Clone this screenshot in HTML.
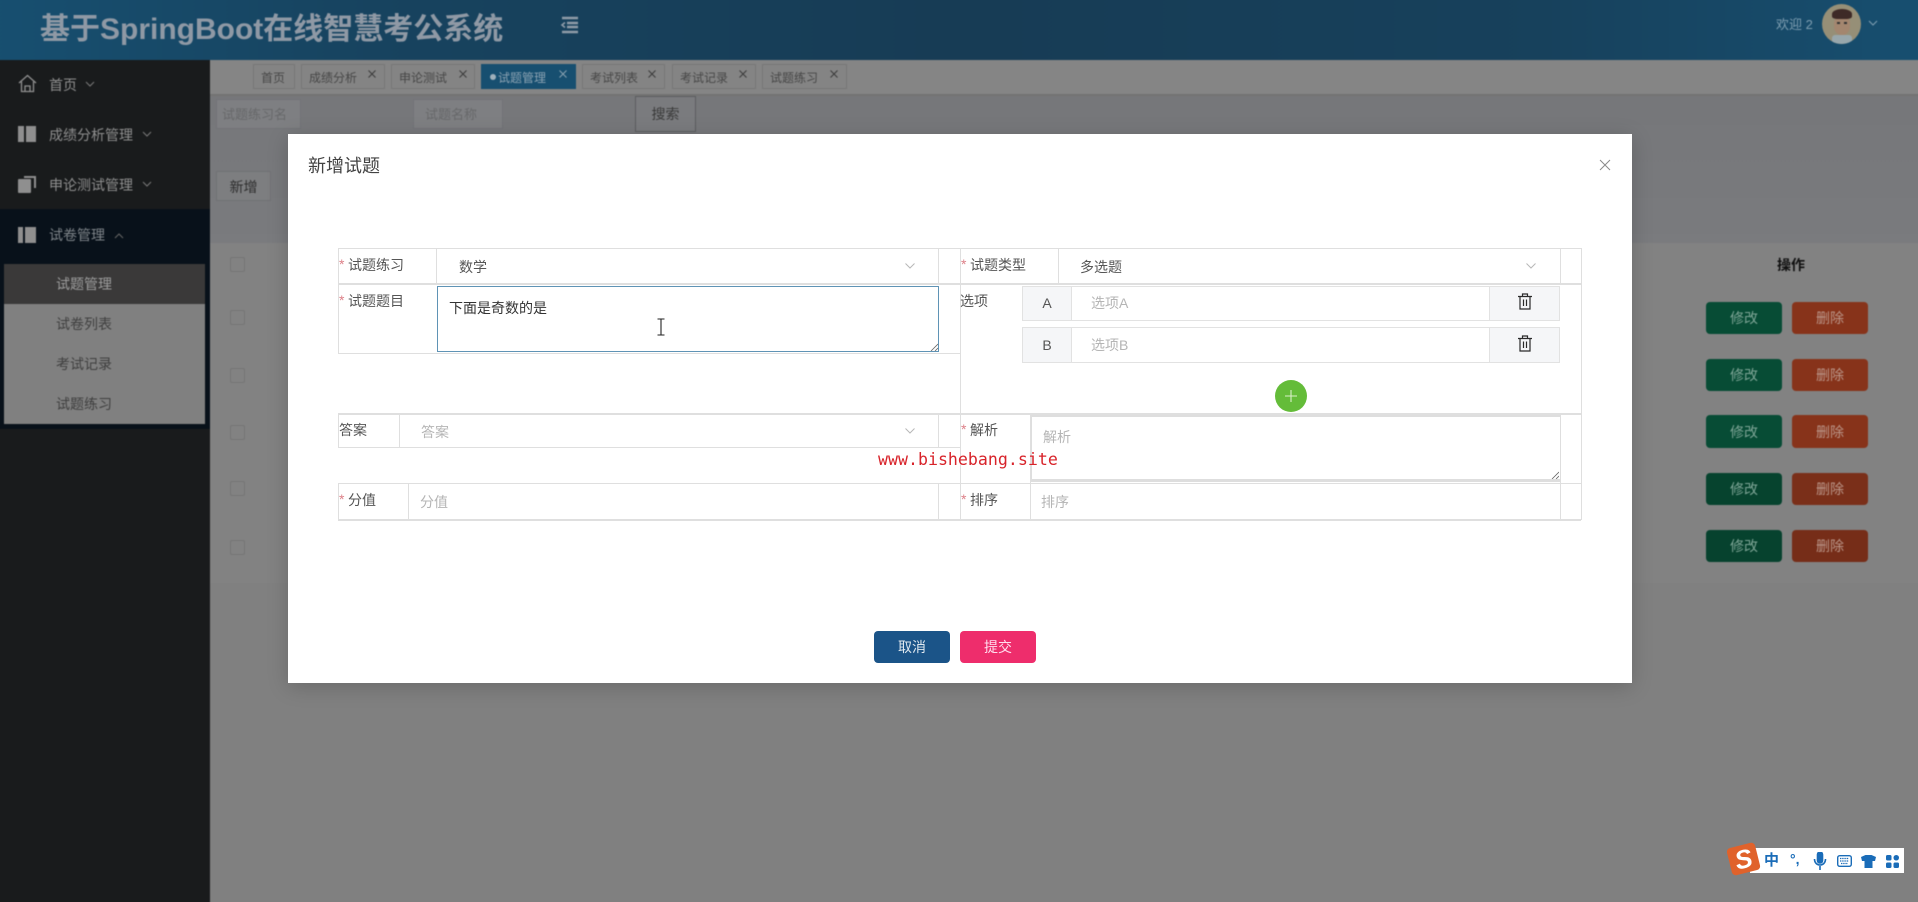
<!DOCTYPE html>
<html lang="zh"><head><meta charset="utf-8"><title>新增试题</title>
<style>
html,body{margin:0;padding:0;width:1918px;height:902px;overflow:hidden;background:#808080}
body{font-family:"Liberation Sans","Noto Sans CJK SC",sans-serif;font-size:14px;position:relative}
div,span,svg{position:absolute;box-sizing:border-box}
.t{line-height:20px;height:20px;white-space:nowrap}
.c{text-align:center}
#bg{left:0;top:0;width:1918px;height:902px;filter:blur(.5px)}
.tag{top:64px;height:25px;line-height:26px;font-size:12px;color:#474747;border:1px solid #777;background:#848484;padding-left:7px;white-space:nowrap}
.x{top:5px}
.m{left:49px;color:#8f8f8f}
.s{left:56px;color:#3f3f3f}
.ch{left:230px;width:15px;height:15px;border:1px solid #757575;border-radius:2px}
.b{width:76px;height:32px;border-radius:4px;line-height:32px;text-align:center;font-size:14px}
.g{left:1706px;background:#074c35;color:#7ea596}
.r{left:1792px;background:#87331a;color:#bb9689}
.l{background:#dfdfdf}
.lab{color:#555;font-size:14px}
.st{color:#dd8088;font-size:14px}
.ph{color:#b5b5b5}
.bx{background:#fff;border:1px solid #e2e2e2}
.gy{background:#f5f6f8;border:1px solid #e2e2e2}
</style></head><body>
<svg width="0" height="0" style="left:0;top:0"><defs><path id="xm" d="M.5.5L7.5 7.5M7.5.5L.5 7.5" fill="none" stroke-width="1"/></defs></svg>
<div id="bg">
 <div style="left:-6px;top:-6px;width:1930px;height:66px;background:linear-gradient(90deg,#174f70 0%,#17435f 20%,#173c55 50%,#17415c 80%,#174f70 100%)"></div>
 <div class="t" style="left:40px;top:15px;height:30px;line-height:30px;font-size:30px;font-weight:bold;color:#8f99a5">基于SpringBoot在线智慧考公系统</div>
 <svg style="left:560px;top:16px" width="20" height="18" viewBox="0 0 20 18" fill="none" stroke="#8f9ca8" stroke-width="2.4"><path d="M2 2H18M7 7H18M7 11H18M2 16H18"/><path d="M5 6.5L2 9L5 11.5" stroke-width="1.6"/></svg>
 <div class="t" style="left:1776px;top:15px;color:#7d9db0;font-size:13px">欢迎 2</div>
 <div style="left:1822px;top:4px;width:39px;height:40px;border-radius:50%;background:#968f77;overflow:hidden">
  <div style="left:10px;top:31px;width:20px;height:9px;background:#98a7ac;border-radius:3px"></div>
  <div style="left:12px;top:11px;width:16px;height:20px;background:#a3866f;border-radius:45%"></div>
  <div style="left:10px;top:5px;width:20px;height:10px;background:#3e2a27;border-radius:50% 50% 25% 25%"></div>
  <div style="left:15px;top:18px;width:3px;height:2px;background:#333"></div>
  <div style="left:22px;top:18px;width:3px;height:2px;background:#333"></div>
 </div>
 <svg style="left:1868px;top:20px" width="10" height="7" viewBox="0 0 10 7" fill="none" stroke="#7d9db0" stroke-width="1.1"><path d="M1 1L5 5L9 1"/></svg>

 <div style="left:-6px;top:60px;width:216px;height:850px;background:#191b1c"></div>
 <div style="left:-6px;top:209px;width:216px;height:220px;background:#08111a"></div>
 <svg style="left:18px;top:74px" width="19" height="19" viewBox="0 0 19 19" fill="none" stroke="#8f8f8f" stroke-width="1.3"><path d="M1 9L9.5 1.5L18 9M3.5 7.5V17.5H15.5V7.5M7 17.5V12H12V17.5"/></svg>
 <div class="t m" style="top:75px">首页</div>
 <svg style="left:85px;top:81px" width="10" height="7" viewBox="0 0 10 7" fill="none" stroke="#7a7a7a"><path d="M1 1L5 5L9 1"/></svg>
 <div style="left:18px;top:126px;width:18px;height:16px;background:#8f8f8f"></div><div style="left:24px;top:126px;width:2px;height:16px;background:#191b1c"></div>
 <div class="t m" style="top:125px">成绩分析管理</div>
 <svg style="left:142px;top:131px" width="10" height="7" viewBox="0 0 10 7" fill="none" stroke="#7a7a7a"><path d="M1 1L5 5L9 1"/></svg>
 <div style="left:18px;top:179px;width:13px;height:14px;background:#8f8f8f;border-radius:1px"></div><div style="left:24px;top:176px;width:12px;height:12px;border:2px solid #8f8f8f;border-left:0;border-bottom:0"></div>
 <div class="t m" style="top:175px">申论测试管理</div>
 <svg style="left:142px;top:181px" width="10" height="7" viewBox="0 0 10 7" fill="none" stroke="#7a7a7a"><path d="M1 1L5 5L9 1"/></svg>
 <div style="left:18px;top:227px;width:18px;height:16px;background:#8f8f8f"></div><div style="left:23px;top:227px;width:2px;height:16px;background:#08111a"></div>
 <div class="t m" style="top:225px;color:#7f858a">试卷管理</div>
 <svg style="left:114px;top:232px" width="10" height="7" viewBox="0 0 10 7" fill="none" stroke="#666"><path d="M1 6L5 2L9 6"/></svg>
 <div style="left:4px;top:264px;width:201px;height:160px;background:#808080"></div>
 <div style="left:4px;top:264px;width:201px;height:40px;background:#3a3939"></div>
 <div class="t s" style="top:274px;color:#9d9d9d">试题管理</div>
 <div class="t s" style="top:314px">试卷列表</div>
 <div class="t s" style="top:354px">考试记录</div>
 <div class="t s" style="top:394px">试题练习</div>

 <div style="left:210px;top:60px;width:1716px;height:36px;background:#858585;border-bottom:2px solid #737373"></div>
 <div style="left:210px;top:96px;width:1716px;height:147px;background:linear-gradient(#76777a,#7a7b7e)"></div>
 <div style="left:210px;top:243px;width:1716px;height:340px;background:#828282"></div>
 <div class="tag" style="left:253px;width:42px">首页</div>
 <div class="tag" style="left:301px;width:84px">成绩分析<svg class="x" style="left:66px" width="8" height="8" stroke="#3a3a3a"><use href="#xm"/></svg></div>
 <div class="tag" style="left:391px;width:84px">申论测试<svg class="x" style="left:67px" width="8" height="8" stroke="#3a3a3a"><use href="#xm"/></svg></div>
 <div class="tag" style="left:481px;width:95px;background:#174f70;border-color:#174f70;color:#8aa2b2;padding-left:8px"><span style="left:8px;top:9px;width:6px;height:6px;border-radius:50%;background:#9fb0bb"></span><span style="left:16px;top:0">试题管理</span><svg class="x" style="left:77px" width="8" height="8" stroke="#8aa2b2"><use href="#xm"/></svg></div>
 <div class="tag" style="left:582px;width:83px">考试列表<svg class="x" style="left:65px" width="8" height="8" stroke="#3a3a3a"><use href="#xm"/></svg></div>
 <div class="tag" style="left:672px;width:84px">考试记录<svg class="x" style="left:66px" width="8" height="8" stroke="#3a3a3a"><use href="#xm"/></svg></div>
 <div class="tag" style="left:762px;width:85px">试题练习<svg class="x" style="left:67px" width="8" height="8" stroke="#3a3a3a"><use href="#xm"/></svg></div>

 <div class="t" style="left:216px;top:99px;width:85px;height:30px;line-height:30px;border:1px solid #727377;background:#7e7f82;color:#67686a;font-size:13px;padding-left:5px">试题练习名</div>
 <div class="t" style="left:413px;top:99px;width:90px;height:30px;line-height:30px;border:1px solid #727377;background:#7e7f82;color:#67686a;font-size:13px;padding-left:11px">试题名称</div>
 <div class="t c" style="left:635px;top:96px;width:61px;height:36px;line-height:34px;border:1px solid #5c5d5f;background:#7a7b7e;color:#3a3a3a">搜索</div>
 <div class="t c" style="left:216px;top:171px;width:55px;height:30px;line-height:30px;border:1px solid #707174;background:#7d7e80;color:#2e2e2e">新增</div>

 <div class="ch" style="top:257px"></div><div class="ch" style="top:310px"></div><div class="ch" style="top:368px"></div><div class="ch" style="top:425px"></div><div class="ch" style="top:481px"></div><div class="ch" style="top:540px"></div>
 <div class="t c" style="left:1751px;top:255px;width:80px;font-weight:bold;color:#111">操作</div>
 <div class="b g" style="top:302px">修改</div><div class="b r" style="top:302px">删除</div>
 <div class="b g" style="top:359px">修改</div><div class="b r" style="top:359px">删除</div>
 <div class="b g" style="top:415px;height:33px;line-height:34px">修改</div><div class="b r" style="top:415px;height:33px;line-height:34px">删除</div>
 <div class="b g" style="top:473px;background:#06432e">修改</div><div class="b r" style="top:473px;background:#7a2f19">删除</div>
 <div class="b g" style="top:530px;background:#06422e">修改</div><div class="b r" style="top:530px;background:#762d18">删除</div>
</div>

<div style="left:288px;top:134px;width:1344px;height:549px;background:#fff;box-shadow:0 4px 20px rgba(0,0,0,.18)"></div>
<div class="t" style="left:308px;top:154px;height:24px;line-height:24px;font-size:18px;color:#424242">新增试题</div>
<svg style="left:1599px;top:159px" width="12" height="12" viewBox="0 0 12 12" stroke="#8a8a8a" stroke-width="1"><path d="M1 1L11 11M11 1L1 11"/></svg>

<!-- form lines -->
<div class="l" style="left:338px;top:248px;width:1243px;height:1px"></div>
<div class="l" style="left:338px;top:283px;width:1243px;height:2px"></div>
<div class="l" style="left:338px;top:353px;width:622px;height:1px"></div>
<div class="l" style="left:338px;top:413px;width:1243px;height:2px"></div>
<div class="l" style="left:338px;top:447px;width:622px;height:1px"></div>
<div class="l" style="left:338px;top:483px;width:1243px;height:1px"></div>
<div class="l" style="left:338px;top:519px;width:1243px;height:2px"></div>
<div class="l" style="left:338px;top:248px;width:1px;height:105px"></div>
<div class="l" style="left:338px;top:413px;width:1px;height:34px"></div>
<div class="l" style="left:338px;top:484px;width:1px;height:36px"></div>
<div class="l" style="left:960px;top:248px;width:1px;height:272px"></div>
<div class="l" style="left:1581px;top:248px;width:1px;height:272px"></div>
<div class="l" style="left:938px;top:248px;width:1px;height:36px"></div>
<div class="l" style="left:938px;top:413px;width:1px;height:34px"></div>
<div class="l" style="left:938px;top:484px;width:1px;height:36px"></div>
<div class="l" style="left:1560px;top:248px;width:1px;height:36px"></div>
<div class="l" style="left:1560px;top:413px;width:1px;height:107px"></div>
<div class="l" style="left:436px;top:248px;width:1px;height:36px"></div>
<div class="l" style="left:1058px;top:248px;width:1px;height:36px"></div>
<div class="l" style="left:399px;top:414px;width:1px;height:34px"></div>
<div class="l" style="left:408px;top:484px;width:1px;height:36px"></div>
<div class="l" style="left:1030px;top:414px;width:1px;height:106px"></div>

<!-- row1 -->
<div class="t st" style="left:339px;top:254px">*</div><div class="t lab" style="left:348px;top:255px">试题练习</div>
<div class="t" style="left:459px;top:257px;color:#555">数学</div>
<svg style="left:905px;top:263px" width="10" height="6" viewBox="0 0 10 6" fill="none" stroke="#b8b8b8"><path d="M.5 .5L5 5L9.5 .5"/></svg>
<div class="t st" style="left:961px;top:254px">*</div><div class="t lab" style="left:970px;top:255px">试题类型</div>
<div class="t" style="left:1080px;top:257px;color:#555">多选题</div>
<svg style="left:1526px;top:263px" width="10" height="6" viewBox="0 0 10 6" fill="none" stroke="#b8b8b8"><path d="M.5 .5L5 5L9.5 .5"/></svg>

<!-- row2 -->
<div class="t st" style="left:339px;top:290px">*</div><div class="t lab" style="left:348px;top:291px">试题题目</div>
<div style="left:437px;top:286px;width:502px;height:66px;border:1px solid #5f93b5;background:#fff"></div>
<div class="t" style="left:449px;top:298px;color:#333">下面是奇数的是</div>
<svg style="left:930px;top:343px" width="8" height="8" viewBox="0 0 8 8" stroke="#666" stroke-width=".8"><path d="M1 8L8 1M5 8L8 5"/></svg>
<svg style="left:656px;top:318px" width="10" height="18" viewBox="0 0 10 18" fill="none" stroke="#222" stroke-width="1.1"><path d="M1.5 1H8.5M5 1V17M1.5 17H8.5"/></svg>
<div class="t lab" style="left:960px;top:291px">选项</div>

<div class="bx" style="left:1022px;top:286px;width:538px;height:35px"></div>
<div class="gy t c" style="left:1022px;top:286px;width:50px;height:35px;line-height:33px;color:#555">A</div>
<div class="gy" style="left:1489px;top:286px;width:71px;height:35px"></div>
<div class="t ph" style="left:1091px;top:293px">选项A</div>
<div class="bx" style="left:1022px;top:327px;width:538px;height:36px"></div>
<div class="gy t c" style="left:1022px;top:327px;width:50px;height:36px;line-height:34px;color:#555">B</div>
<div class="gy" style="left:1489px;top:327px;width:71px;height:36px"></div>
<div class="t ph" style="left:1091px;top:335px">选项B</div>
<svg style="left:1517px;top:293px" width="16" height="17" viewBox="0 0 16 17" fill="none" stroke="#2a2a2a" stroke-width="1.2"><path d="M1 3.5H15M5.5 3.5V1H10.5V3.5M3 3.5V16H13V3.5M6.5 6.5V13M9.5 6.5V13"/></svg>
<svg style="left:1517px;top:335px" width="16" height="17" viewBox="0 0 16 17" fill="none" stroke="#2a2a2a" stroke-width="1.2"><path d="M1 3.5H15M5.5 3.5V1H10.5V3.5M3 3.5V16H13V3.5M6.5 6.5V13M9.5 6.5V13"/></svg>
<div style="left:1275px;top:380px;width:32px;height:32px;border-radius:50%;background:#64bc39"></div>
<svg style="left:1285px;top:390px" width="12" height="12" viewBox="0 0 12 12" stroke="#d8f0c8" stroke-width="1.1"><path d="M6 0V12M0 6H12"/></svg>

<!-- row3 -->
<div class="t lab" style="left:339px;top:420px">答案</div>
<div class="t ph" style="left:421px;top:422px">答案</div>
<svg style="left:905px;top:428px" width="10" height="6" viewBox="0 0 10 6" fill="none" stroke="#b8b8b8"><path d="M.5 .5L5 5L9.5 .5"/></svg>
<div class="t st" style="left:961px;top:419px">*</div><div class="t lab" style="left:970px;top:420px">解析</div>
<div style="left:1031px;top:415px;width:530px;height:67px;border:1px solid #dedede;border-top-width:2px;border-bottom-width:3px;background:#fff"></div>
<div class="t ph" style="left:1043px;top:427px">解析</div>
<svg style="left:1551px;top:471px" width="8" height="8" viewBox="0 0 8 8" stroke="#666" stroke-width=".8"><path d="M1 8L8 1M5 8L8 5"/></svg>
<div class="t" style="left:878px;top:450px;font-family:'DejaVu Sans Mono','Liberation Mono',monospace;font-size:16.6px;color:#d8232a">www.bishebang.site</div>

<!-- row4 -->
<div class="t st" style="left:339px;top:489px">*</div><div class="t lab" style="left:348px;top:490px">分值</div>
<div class="t ph" style="left:420px;top:492px">分值</div>
<div class="t st" style="left:961px;top:489px">*</div><div class="t lab" style="left:970px;top:490px">排序</div>
<div class="t ph" style="left:1041px;top:492px">排序</div>

<div class="b" style="left:874px;top:631px;background:#1b5488;color:#dfe8ef">取消</div>
<div class="b" style="left:960px;top:631px;background:#ee2d6c;color:#fde">提交</div>

<!-- IME -->
<div style="left:1750px;top:848px;width:154px;height:25px;background:#fff"></div>
<div class="t" style="left:1729px;top:845px;width:29px;height:28px;background:#e0622b;border-radius:4px;transform:rotate(-14deg);color:#fff;font-size:26px;font-weight:bold;font-style:italic;line-height:28px;text-align:center">S</div>
<div class="t" style="left:1764px;top:851px;color:#1a6cb8;font-weight:bold;font-size:15px">中</div>
<div class="t" style="left:1790px;top:849px;color:#1a6cb8;font-weight:bold;font-size:14px">°,</div>
<svg style="left:1813px;top:852px" width="14" height="18" viewBox="0 0 14 18" fill="none" stroke="#1a6cb8" stroke-width="1.6"><rect x="4.5" y="0" width="5" height="11" rx="2.5" fill="#1a6cb8"/><path d="M1.5 7C1.5 15 12.5 15 12.5 7M7 14V18"/></svg>
<svg style="left:1837px;top:855px" width="15" height="12" viewBox="0 0 15 12"><rect x=".7" y=".7" width="13.6" height="10.6" rx="2" fill="none" stroke="#1a6cb8" stroke-width="1.4"/><path d="M3 3.5H12M3 6H12M4 8.5H11" stroke="#1a6cb8" stroke-width="1.3" stroke-dasharray="1.4 .8"/></svg>
<svg style="left:1861px;top:855px" width="15" height="13" viewBox="0 0 15 13"><path d="M0 2L4.5 0H10.5L15 2L14 6H11.5V13H3.5V6H1Z" fill="#1a6cb8"/></svg>
<svg style="left:1886px;top:855px" width="13" height="13" viewBox="0 0 13 13" fill="#1a6cb8"><rect width="5.5" height="5.5" rx="1.5"/><rect x="7.5" width="5.5" height="5.5" rx="2.7"/><rect y="7.5" width="5.5" height="5.5" rx="1.5"/><rect x="7.5" y="7.5" width="5.5" height="5.5" rx="1.5"/></svg>
</body></html>
